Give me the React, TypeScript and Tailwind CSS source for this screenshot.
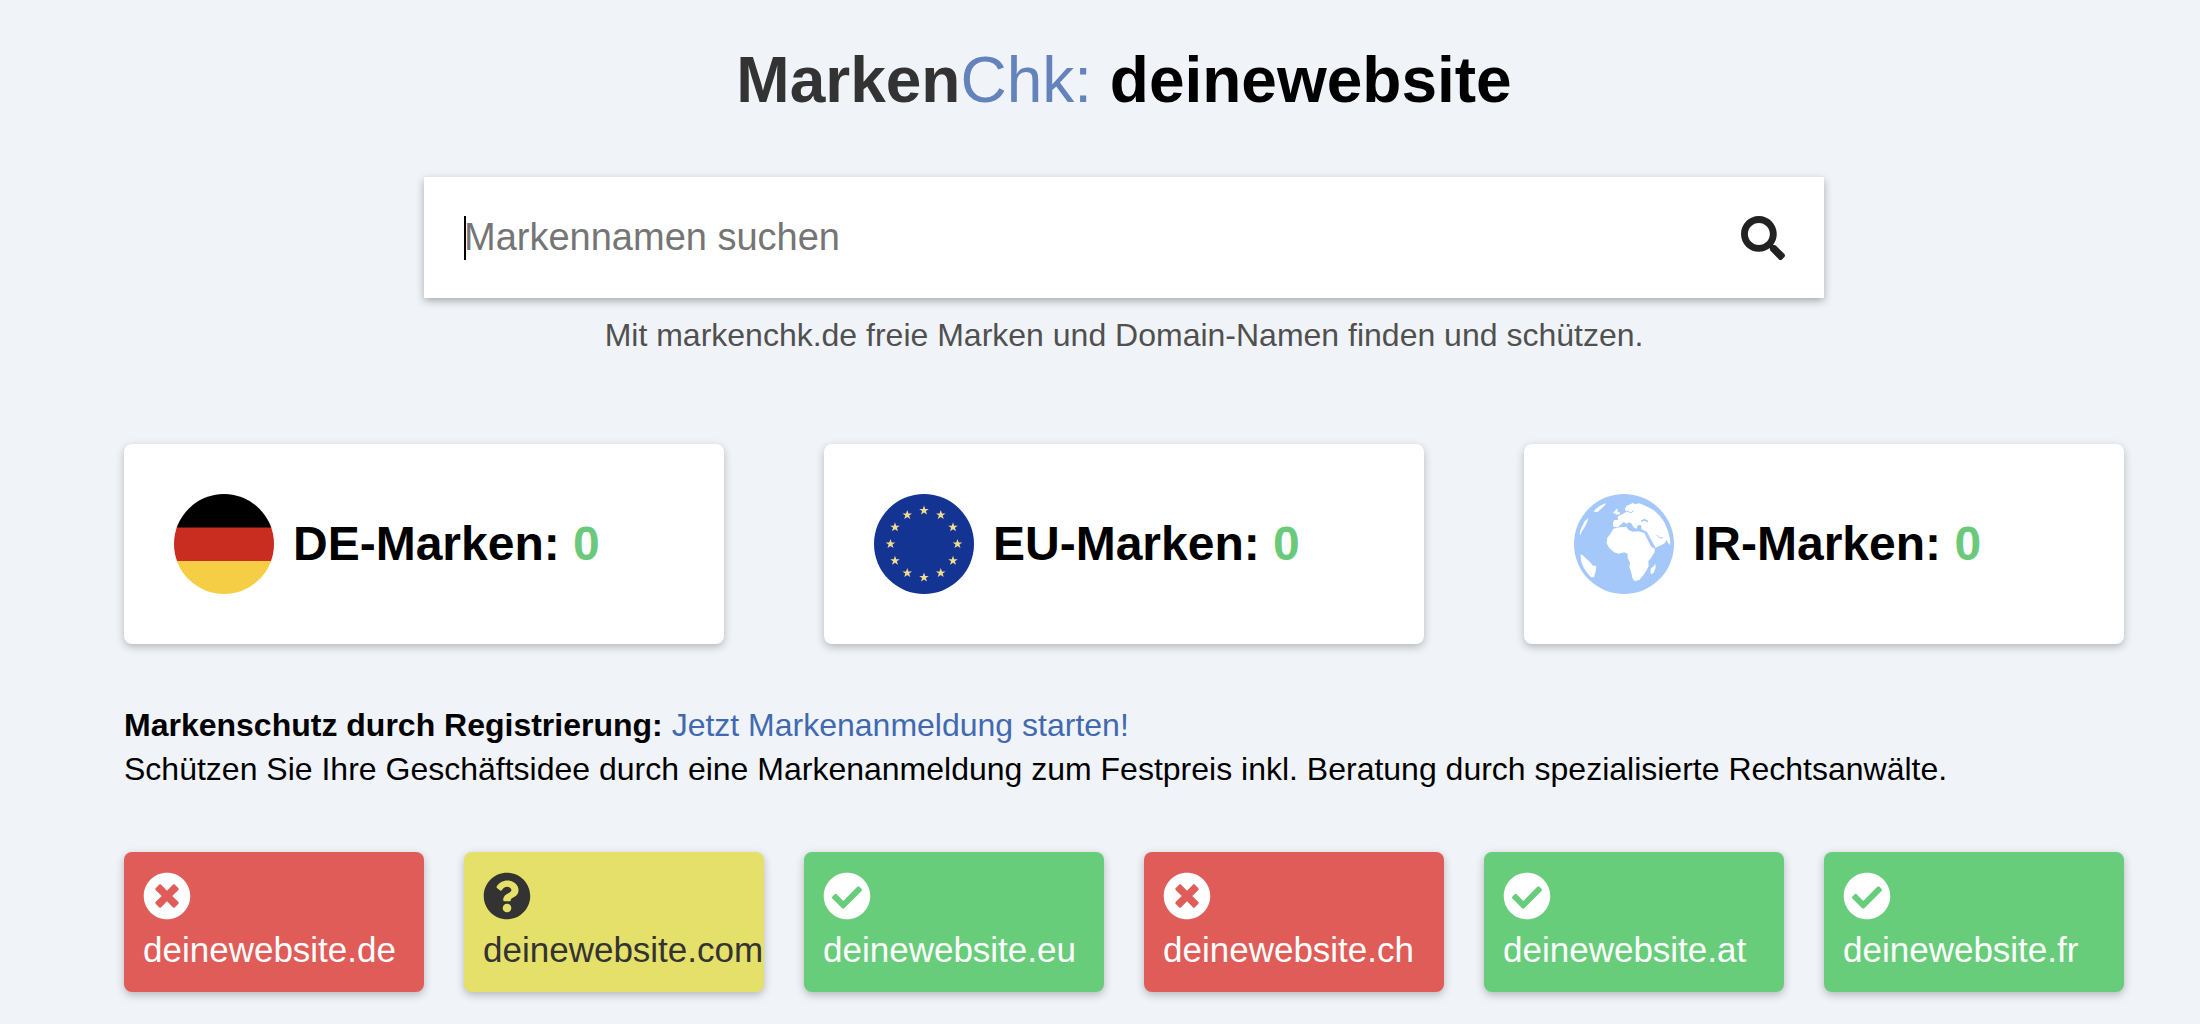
import { ReactNode } from "react";
import { IconType } from "react-icons";
import { FaCheckCircle, FaQuestionCircle, FaSearch, FaTimesCircle } from "react-icons/fa";

type Status = "taken" | "unknown" | "free";

const statuses: Record<Status, { icon: IconType; className: string; label: string }> = {
    taken: { icon: FaTimesCircle, className: "bg-[#e05c58] text-white", label: "vergeben" },
    unknown: { icon: FaQuestionCircle, className: "bg-[#e5e069] text-[#333333]", label: "unbekannt" },
    free: { icon: FaCheckCircle, className: "bg-[#68cd7a] text-white", label: "frei" },
};

const domains: { name: string; status: Status }[] = [
    { name: "deinewebsite.de", status: "taken" },
    { name: "deinewebsite.com", status: "unknown" },
    { name: "deinewebsite.eu", status: "free" },
    { name: "deinewebsite.ch", status: "taken" },
    { name: "deinewebsite.at", status: "free" },
    { name: "deinewebsite.fr", status: "free" },
];

function GermanFlag() {
    return (
        <svg viewBox="0 0 100 100" className="size-25 shrink-0 rounded-full" aria-hidden="true">
            <rect width="100" height="34" fill="#000000" />
            <rect y="33.5" width="100" height="34" fill="#c92d20" />
            <rect y="67" width="100" height="33" fill="#f6ce46" />
        </svg>
    );
}

function EuFlag() {
    const angles = [0, 30, 60, 90, 120, 150, 180, 210, 240, 270, 300, 330];

    return (
        <svg viewBox="0 0 100 100" className="size-25 shrink-0" aria-hidden="true">
            <circle cx="50" cy="50" r="50" fill="#143494" />
            {angles.map((angle) => {
                const rad = (angle * Math.PI) / 180;
                const x = 50 + 33.5 * Math.sin(rad);
                const y = 50 - 33.5 * Math.cos(rad);
                return (
                    <path
                        key={angle}
                        transform={`translate(${x} ${y})`}
                        d="M0-5 1.2-1.6 4.8-1.6 1.9.6 3 4.1 0 2 -3 4.1 -1.9.6 -4.8-1.6 -1.2-1.6Z"
                        fill="#f5dc8c"
                    />
                );
            })}
        </svg>
    );
}

function Globe() {
    return (
        <svg viewBox="27 26 300 300" className="size-25 shrink-0" aria-hidden="true">
            <circle cx="177" cy="176" r="150" fill="#a5c8fa" />
            <g fill="#ffffff">
                {/* Europe, Asia and Arabia */}
                <path d="M180 70 185 61 196 57 203 53 211 57 222 54 236 59 250 66 267 75 284 91 298 111 309 137 315 160 316 180 309 172 304 163 300 173 288 180 270 188 258 170 248 152 240 137 230 132 228 119 218 120 215 130 207 127 198 113 190 111 186 116 176 110 167 118 158 126 145 124 144 114 147 105 160 103 157 95 165 89 178 84 186 77 180 75Z" />
                {/* British Isles */}
                <path d="M153 70 158 72 157 78 165 82 164 87 151 88 153 82 147 86 145 80 151 77Z" />
                {/* Africa */}
                <path d="M145 130 164 126 184 124 190 133 203 139 220 138 238 143 248 163 259 184 270 190 268 202 257 219 250 228 251 243 244 256 235 270 223 284 209 287 203 280 198 259 193 244 195 232 188 217 188 206 178 201 161 205 147 201 132 187 125 174 127 157 136 146Z" />
                {/* Madagascar */}
                <path d="M271 235 272 247 266 262 258 267 256 258 258 249 266 243Z" />
                {/* South America */}
                <path d="M46 208 52 209 62 218 77 232 82 240 94 243 92 258 87 276 78 276 67 263 56 247 49 229Z" />
                {/* Greenland and North America */}
                <path d="M125 54 118 61 107 72 99 79 87 80 91 72 104 62 116 56Z" />
                <path d="M70 98 67 109 59 126 51 138 46 151 45 139 50 125 59 108Z" />
            </g>
            {/* Baltic, Black Sea, Red Sea and Persian Gulf */}
            <g fill="none" stroke="#a5c8fa" strokeLinecap="round" strokeLinejoin="round">
                <path d="M186 78 199 82 205 76" strokeWidth="3" />
                <path d="M230 107 238 103 247 108" strokeWidth="5" />
                <path d="M243 139 256 163 269 187" strokeWidth="4" />
                <path d="M276 150 283 157 293 158" strokeWidth="3" />
            </g>
        </svg>
    );
}

function BrandCard({ flag, label, count }: { flag: ReactNode; label: string; count: number }) {
    return (
        <div className="flex items-center gap-[19px] rounded-lg bg-white p-[50px] shadow-[0_3px_8px_rgba(0,0,0,0.25)]">
            {flag}
            <h2 className="text-5xl font-bold whitespace-nowrap">
                {label}: <span className="text-[#6bc97b]">{count}</span>
            </h2>
        </div>
    );
}

function DomainTile({ name, status }: { name: string; status: Status }) {
    const { icon: Icon, className, label } = statuses[status];

    return (
        <li className={`flex h-35 flex-col rounded-lg pt-5 pl-[19px] shadow-[0_3px_8px_rgba(0,0,0,0.25)] ${className}`}>
            <Icon className="size-12" role="img" aria-label={label} />
            <span className="mt-2 text-[35px] leading-11 whitespace-nowrap">{name}</span>
        </li>
    );
}

export default function App() {
    return (
        <main className="min-h-screen bg-[#f0f4f8] pt-12 pr-[76px] pb-8 pl-[124px] font-['Liberation_Sans',Arial,sans-serif] text-black">
            <h1 className="text-center text-[64px] leading-16 font-bold">
                <span className="text-[#333333]">Marken</span>
                <span className="font-normal text-[#6482bb]">Chk:</span> deinewebsite
            </h1>

            <form
                className="mx-auto mt-[65px] flex h-[121px] w-7/10 items-center bg-white pr-[39px] pl-10 shadow-[0_3px_8px_rgba(0,0,0,0.3)]"
                onSubmit={(e) => e.preventDefault()}
            >
                <span className="-mr-0.5 h-11 w-0.5 bg-black" />
                <input
                    type="text"
                    aria-label="Markennamen suchen"
                    placeholder="Markennamen suchen"
                    className="min-w-0 flex-1 bg-transparent text-[38px] outline-none placeholder:text-[#757575]"
                />
                <button type="submit" aria-label="Suchen" className="cursor-pointer text-[#222222]">
                    <FaSearch className="size-11" />
                </button>
            </form>
            <p className="mt-[15px] text-center text-[32px] leading-11 text-[#505050]">
                Mit markenchk.de freie Marken und Domain-Namen finden und schützen.
            </p>

            <section className="mt-[87px] grid grid-cols-3 gap-25">
                <BrandCard flag={<GermanFlag />} label="DE-Marken" count={0} />
                <BrandCard flag={<EuFlag />} label="EU-Marken" count={0} />
                <BrandCard flag={<Globe />} label="IR-Marken" count={0} />
            </section>

            <p className="mt-[59px] text-[32px] leading-11">
                <strong>Markenschutz durch Registrierung:</strong>{" "}
                <a href="#anmeldung" className="text-[#4169b0]">
                    Jetzt Markenanmeldung starten!
                </a>
                <br />
                Schützen Sie Ihre Geschäftsidee durch eine Markenanmeldung zum Festpreis inkl. Beratung durch spezialisierte
                Rechtsanwälte.
            </p>

            <ul className="mt-[61px] grid grid-cols-6 gap-10">
                {domains.map((domain) => (
                    <DomainTile key={domain.name} name={domain.name} status={domain.status} />
                ))}
            </ul>
        </main>
    );
}
